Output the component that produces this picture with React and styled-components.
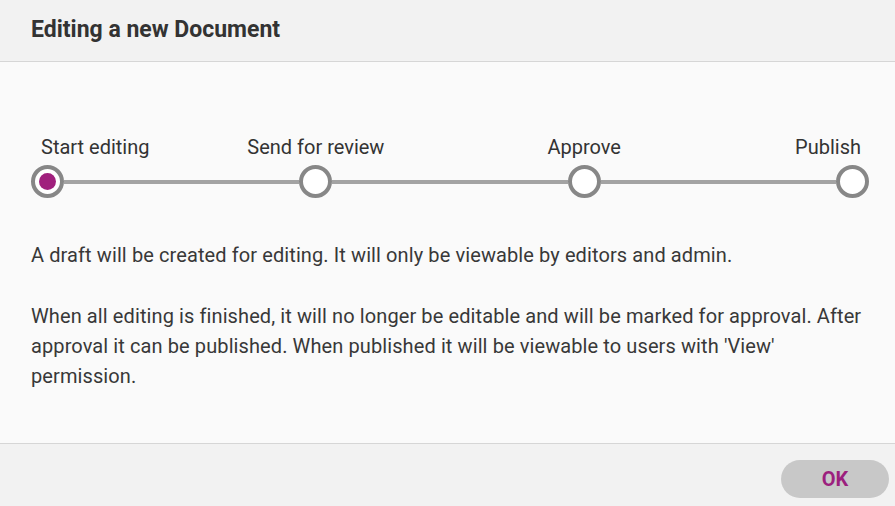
import React from 'react';
import styled, { createGlobalStyle } from 'styled-components';

const GlobalStyle = createGlobalStyle`
  html, body {
    margin: 0;
    padding: 0;
    background: #fafafa;
  }
  body {
    font-family: Roboto, "Liberation Sans", sans-serif;
    color: #333;
  }
`;

const Dialog = styled.div`
  width: 895px;
  height: 506px;
  display: flex;
  flex-direction: column;
  background: #fafafa;
  overflow: hidden;
`;

const Header = styled.div`
  height: 61px;
  flex-shrink: 0;
  display: flex;
  align-items: center;
  padding: 0 31px;
  background: #f2f2f2;
  border-bottom: 1px solid #d6d6d6;
  box-sizing: content-box;
`;

const Title = styled.h2`
  margin: 0 0 3px;
  font-size: 23px;
  font-weight: 700;
  color: #333;
`;

const Body = styled.div`
  flex: 1;
  padding: 73px 26px 0 31px;
`;

const Stepper = styled.div`
  width: 838px;
`;

const Row = styled.div`
  display: flex;
  align-items: center;
`;

const LabelSlot = styled.div`
  width: 33px;
  flex-shrink: 0;
  display: flex;
  justify-content: ${(p) => p.$align};
  white-space: nowrap;
`;

const Label = styled.span`
  font-size: 20px;
  line-height: 24px;
  color: #333;
  margin-left: ${(p) => (p.$align === 'flex-start' ? '10px' : '0')};
  margin-right: ${(p) => (p.$align === 'flex-end' ? '8px' : '0')};
`;

const Spacer = styled.div`
  flex: 1;
`;

const Track = styled(Row)`
  margin-top: 6px;
`;

const Node = styled.div`
  width: 33px;
  height: 33px;
  flex-shrink: 0;
  box-sizing: border-box;
  border-radius: 50%;
  border: 4px solid #878787;
  background: #fff;
  display: flex;
  align-items: center;
  justify-content: center;
`;

const Dot = styled.div`
  width: 17px;
  height: 17px;
  border-radius: 50%;
  background: #a0207d;
`;

const Connector = styled.div`
  flex: 1;
  height: 4px;
  background: #a3a3a3;
`;

const Text = styled.p`
  margin: 0;
  font-size: 20px;
  line-height: 30px;
  letter-spacing: 0.1px;
  color: #383838;
  & + & {
    margin-top: 31px;
  }
`;

const Paragraphs = styled.div`
  margin-top: 42px;
`;

const Footer = styled.div`
  height: 63px;
  flex-shrink: 0;
  box-sizing: border-box;
  display: flex;
  justify-content: flex-end;
  align-items: flex-start;
  padding: 16px 6px 0;
  background: #f2f2f2;
  border-top: 1px solid #d6d6d6;
`;

const OkButton = styled.button`
  width: 108px;
  height: 38px;
  border: none;
  border-radius: 19px;
  background: #c8c8c8;
  color: #9c1f7e;
  font-family: Roboto, "Liberation Sans", sans-serif;
  font-size: 20px;
  font-weight: 700;
  cursor: pointer;
`;

const steps = ['Start editing', 'Send for review', 'Approve', 'Publish'];
const current = 0;

const alignFor = (i) =>
  i === 0 ? 'flex-start' : i === steps.length - 1 ? 'flex-end' : 'center';

export default function App() {
  return (
    <>
      <GlobalStyle />
      <Dialog>
        <Header>
          <Title>Editing a new Document</Title>
        </Header>
        <Body>
          <Stepper>
            <Row>
              {steps.map((s, i) => (
                <React.Fragment key={s}>
                  {i > 0 && <Spacer />}
                  <LabelSlot $align={alignFor(i)}>
                    <Label $align={alignFor(i)}>{s}</Label>
                  </LabelSlot>
                </React.Fragment>
              ))}
            </Row>
            <Track>
              {steps.map((s, i) => (
                <React.Fragment key={s}>
                  {i > 0 && <Connector />}
                  <Node>{i === current && <Dot />}</Node>
                </React.Fragment>
              ))}
            </Track>
          </Stepper>
          <Paragraphs>
            <Text>
              A draft will be created for editing. It will only be viewable by editors and admin.
            </Text>
            <Text>
              When all editing is finished, it will no longer be editable and will be marked for
              approval. After approval it can be published. When published it will be viewable to
              users with 'View' permission.
            </Text>
          </Paragraphs>
        </Body>
        <Footer>
          <OkButton>OK</OkButton>
        </Footer>
      </Dialog>
    </>
  );
}
